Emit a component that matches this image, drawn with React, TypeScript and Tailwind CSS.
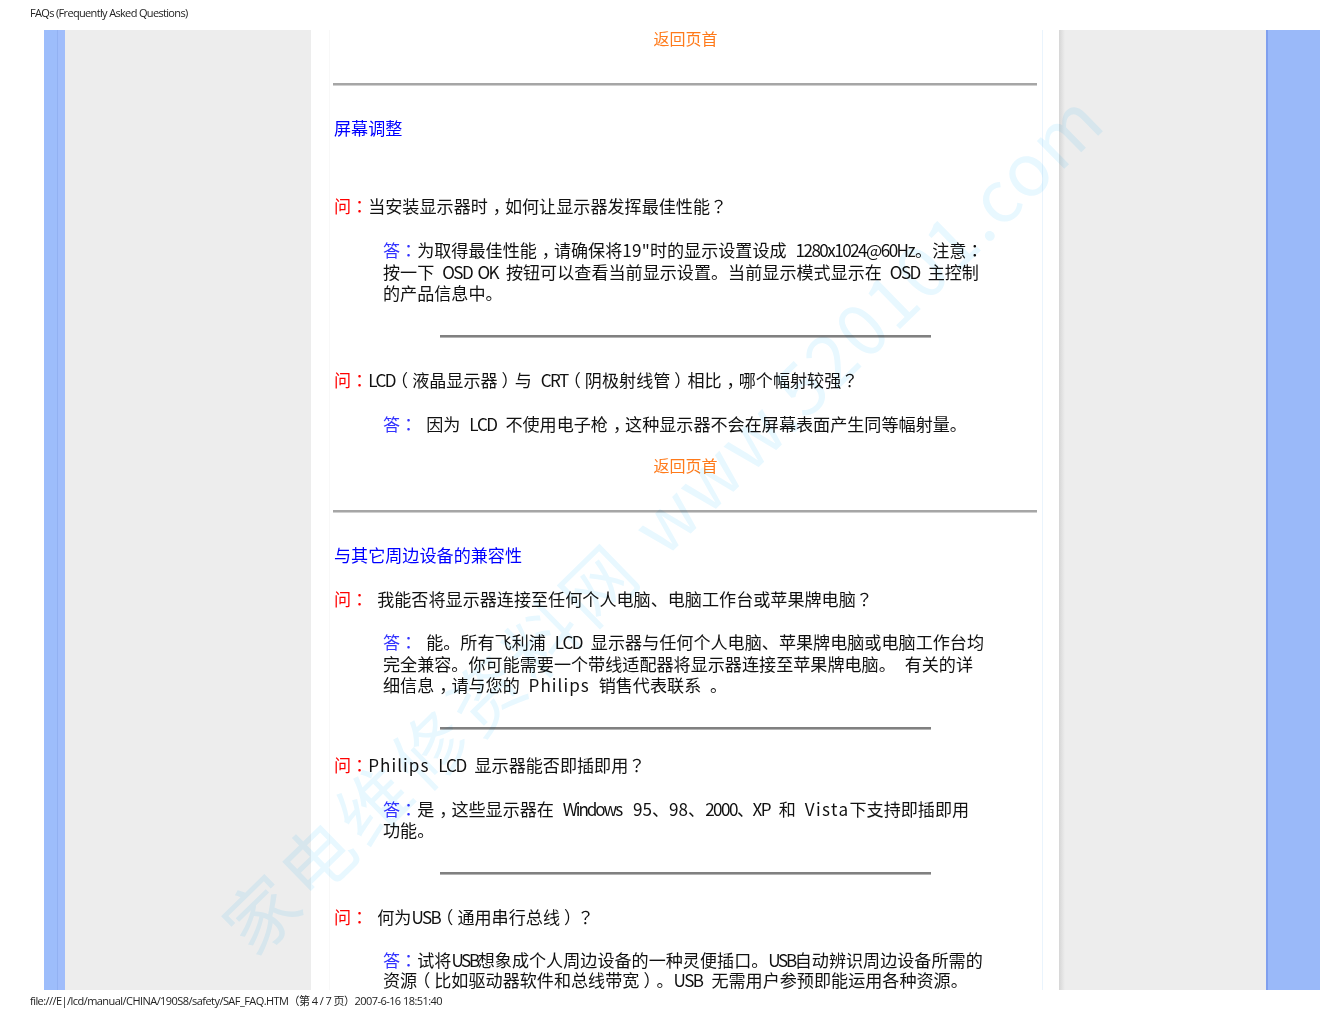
import React from "react";

const cjk = "font-['Noto_Sans_CJK_SC','Noto_Sans',sans-serif]";

function t(s: string): React.ReactNode[] {
  return s.split(/([，：？（）])/).map((part, i) => {
    if (part === "：" || part === "？") {
      return (
        <span key={i} className="font-['Noto_Sans_CJK_TC',sans-serif]">
          {part}
        </span>
      );
    }
    if (part === "，") {
      return (
        <span key={i} className="inline-block translate-x-[5px]">
          {part}
        </span>
      );
    }
    if (part === "（") {
      return (
        <span key={i} className="inline-block -translate-x-1">
          {part}
        </span>
      );
    }
    if (part === "）") {
      return (
        <span key={i} className="inline-block translate-x-1">
          {part}
        </span>
      );
    }
    return <React.Fragment key={i}>{part}</React.Fragment>;
  });
}

function L({ children }: { children: React.ReactNode }) {
  return <span className="tracking-[-0.09em]">{children}</span>;
}
function W({ children }: { children: React.ReactNode }) {
  return <span className="tracking-[0.06em]">{children}</span>;
}
function Q({ children, gap }: { children: React.ReactNode; gap?: boolean }) {
  return (
    <div className="whitespace-pre h-[22px] leading-[22px]">
      <span className="text-[#ff0000]">{t("问：")}</span>
      {gap ? <span className="inline-block w-[9px]" /> : null}
      {children}
    </div>
  );
}
function A({ lines, gap, tight }: { lines: React.ReactNode[]; gap?: boolean; tight?: boolean }) {
  return (
    <div className="ml-[49px] w-[620px] whitespace-pre">
      {lines.map((line, i) => (
        <div key={i} className={tight ? "h-[20.5px] leading-[20.5px]" : "h-[21.5px] leading-[21.5px]"}>
          {i === 0 ? <span className="text-[#3333ff]">{t("答：")}</span> : null}
          {i === 0 && gap ? <span className="inline-block w-[9px]" /> : null}
          {line}
        </div>
      ))}
    </div>
  );
}
function Rule({ long }: { long?: boolean }) {
  return long ? (
    <div className="-ml-[1px] h-[3px] w-[704px] bg-[#a6a6a6] border-b border-[#d0d0d0]" />
  ) : (
    <div className="ml-[106px] h-[3px] w-[491px] bg-[#808080] border-b border-[#b4b4b4]" />
  );
}
function Back({ first }: { first?: boolean }) {
  return (
    <div
      className={`${first ? "h-[18px] leading-[16px]" : "h-[22px] leading-[20px]"} text-center text-[16px] text-[#ff7a1a] w-[703px]`}
    >
      返回页首
    </div>
  );
}

export default function App() {
  return (
    <div className={`relative w-[1320px] h-[1020px] bg-white overflow-hidden text-[17.1px] text-[#111] ${cjk}`}>
      <div className="h-[30px] pl-[30px] pt-[5px] text-[11px] leading-[16px] text-[#222] tracking-[-0.06em] font-['Open_Sans',sans-serif]">
        FAQs (Frequently Asked Questions)
      </div>
      <div className="h-[960px] flex overflow-hidden">
        <div className="w-[44px]" />
        <div className="w-[21px] flex">
          <div className="w-[13px] bg-[#9dbdfb]" />
          <div className="w-[8px] bg-[#a0bdfb] border-l border-[#92b1f2]" />
        </div>
        <div className="w-[246px] bg-[#ededed]" />
        <div className="w-[748px] bg-white flex">
          <div className="w-[19px] border-r border-[#f8f8f8]" />
          <div className="flex-1 overflow-hidden pl-[4px] [word-spacing:5px]">
            <Back first />
            <div className="mt-[35px]"><Rule long /></div>
            <div className="mt-[31px] h-[22px] leading-[22px] text-[#0000ff]">屏幕调整</div>
            <div className="mt-[56px]"><Q>{t("当安装显示器时，如何让显示器发挥最佳性能？")}</Q></div>
            <div className="mt-[22px]">
              <A lines={[
                <>{t("为取得最佳性能，请确保将")}<span className="tracking-[0.01em]">19"</span>时的显示设置设成 <L>1280x1024@60Hz</L><span className="ml-[1px]">。</span>{t("注意：")}</>,
                <span className="[word-spacing:4px]">按一下 <span className="[word-spacing:3px]"><L>OSD OK</L></span> 按钮可以查看当前显示设置。当前显示模式显示在 <L>OSD</L> 主控制</span>,
                <>的产品信息中。</>,
              ]} />
            </div>
            <div className="mt-[31px]"><Rule /></div>
            <div className="mt-[31px]"><Q><L>LCD</L>{t("（液晶显示器）与 ")}<L>CRT</L>{t("（阴极射线管）相比，哪个幅射较强？")}</Q></div>
            <div className="mt-[22px]">
              <A gap lines={[<>因为 <L>LCD</L> {t("不使用电子枪，这种显示器不会在屏幕表面产生同等幅射量。")}</>]} />
            </div>
            <div className="mt-[21px]"><Back /></div>
            <div className="mt-[33px]"><Rule long /></div>
            <div className="mt-[31px] h-[22px] leading-[22px] text-[#0000ff]">与其它周边设备的兼容性</div>
            <div className="mt-[22px]"><Q gap>{t("我能否将显示器连接至任何个人电脑、电脑工作台或苹果牌电脑？")}</Q></div>
            <div className="mt-[21px]">
              <A gap lines={[
                <>能。所有飞利浦 <L>LCD</L> 显示器与任何个人电脑、苹果牌电脑或电脑工作台均</>,
                <>完全兼容。你可能需要一个带线适配器将显示器连接至苹果牌电脑。 有关的详</>,
                <>{t("细信息，请与您的 ")}<W>Philips</W> 销售代表联系 。</>,
              ]} />
            </div>
            <div className="mt-[31px]"><Rule /></div>
            <div className="mt-[24px]"><Q><W>Philips</W> <L>LCD</L> {t("显示器能否即插即用？")}</Q></div>
            <div className="mt-[22px]">
              <A lines={[
                <>{t("是，这些显示器在 ")}<span className="tracking-[-0.12em]">Windows</span> <span className="ml-[3px]">95、98、</span><L>2000、XP</L> 和 <span className="tracking-[0.08em]">Vista</span>下支持即插即用</>,
                <>功能。</>,
              ]} />
            </div>
            <div className="mt-[31px]"><Rule /></div>
            <div className="mt-[31px]"><Q gap>何为<L>USB</L>{t("（通用串行总线）？")}</Q></div>
            <div className="mt-[22px]">
              <A tight lines={[
                <>试将<span className="tracking-[-0.14em]">USB</span>想象成个人周边设备的一种灵便插口。<span className="tracking-[-0.14em]">USB</span>自动辨识周边设备所需的</>,
                <>{t("资源（比如驱动器软件和总线带宽）。")}<L>USB</L> 无需用户参预即能运用各种资源。</>,
              ]} />
            </div>
          </div>
          <div className="w-[1px] bg-[#eaf4fd] mr-[16px] ml-[5px]" />
        </div>
        <div className="w-[207px] bg-[linear-gradient(to_right,#d6d6d6,#ededed_6px)]" />
        <div className="w-[54px] bg-[#9ab9f9] border-l-2 border-[#7f9fee]" />
      </div>
      <div className="h-[30px] pl-[30px] pt-[3px] text-[11px] leading-[16px] text-[#222] tracking-[-0.05em] whitespace-pre font-['Open_Sans','Noto_Sans_CJK_SC',sans-serif]">
        file:///E|/lcd/manual/CHINA/190S8/safety/SAF_FAQ.HTM（第 4 / 7 页）2007-6-16 18:51:40
      </div>
      <div className="absolute left-[660px] top-[520px] w-0 h-0 pointer-events-none">
        <div className="absolute -translate-x-1/2 -translate-y-1/2 -rotate-[44.3deg] whitespace-pre text-[72px] leading-none text-[#e8f8ff] mix-blend-multiply font-['Noto_Sans_CJK_SC',sans-serif]">
          <span className="tracking-[0.09em]">家电维修资料网 </span>
          <span className="tracking-[0.027em]">www.520101.com</span>
        </div>
      </div>
    </div>
  );
}
